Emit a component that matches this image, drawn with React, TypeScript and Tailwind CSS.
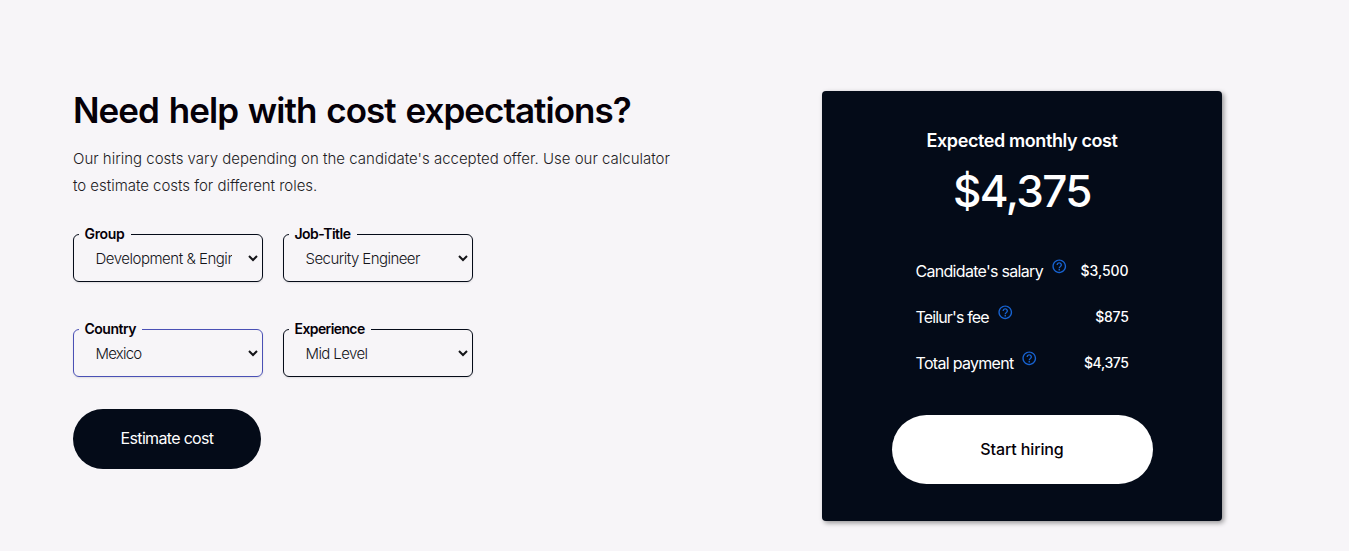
import React from 'react';
import { MdHelpOutline } from 'react-icons/md';

interface SelectFieldProps {
  label: string;
  options: string[];
  labelClass: string;
  selectClass: string;
  active?: boolean;
}

const SelectField: React.FC<SelectFieldProps> = ({
  label,
  options,
  labelClass,
  selectClass,
  active = false,
}) => (
  <fieldset
    className={`h-[58px] w-[190px] min-w-0 rounded-md border pl-[5px] shadow-[0_1px_2px_rgba(0,0,0,0.1)] ${
      active ? 'border-[#4a50b5]' : 'border-[#050b18]'
    }`}
  >
    <legend
      className={`h-5 pl-[5.5px] pr-[6.5px] text-[14px] leading-5 font-semibold whitespace-nowrap text-[#050008] ${labelClass}`}
    >
      {label}
    </legend>
    <select
      className={`block h-[29px] w-[182px] pl-[12.5px] pr-[13px] text-[15px] font-light text-[#141418] outline-none ${selectClass}`}
    >
      {options.map((option) => (
        <option key={option}>{option}</option>
      ))}
    </select>
  </fieldset>
);

interface CostRowProps {
  label: string;
  value: string;
  labelClass: string;
  valueClass: string;
}

const CostRow: React.FC<CostRowProps> = ({ label, value, labelClass, valueClass }) => (
  <div className="flex h-[46px] items-center justify-between">
    <div className="flex items-center">
      <span className={`whitespace-nowrap text-[16px] ${labelClass}`}>{label}</span>
      <MdHelpOutline className="mb-[10px] ml-2 size-[16.5px] text-[#1763d1]" />
    </div>
    <span className={`pb-px text-[14px] font-medium ${valueClass}`}>{value}</span>
  </div>
);

const App: React.FC = () => {
  return (
    <main className="flex h-[551px] w-full items-start overflow-hidden bg-[#f7f5f8] pl-[73px] pt-[91px] font-['Inter','Liberation_Sans',sans-serif]">
      <section className="w-[749px] shrink-0">
        <h1 className="h-10 whitespace-nowrap text-[35px] leading-[39px] font-semibold tracking-[-0.97px] text-[#050008] [word-spacing:2px]">
          Need help with cost expectations?
        </h1>
        <p className="mt-[14px] whitespace-nowrap text-[15px] leading-[27px] font-light text-[#1d1c24]">
          <span className="block">Our hiring costs vary depending on the candidate's accepted offer. Use our calculator</span>
          <span className="block tracking-[-0.03px]">to estimate costs for different roles.</span>
        </p>

        {/* calculator form */}
        <div className="mt-[25px] grid w-[400px] grid-cols-2 gap-x-5 gap-y-[37px]">
          <SelectField
            label="Group"
            options={['Development & Engineering']}
            labelClass="tracking-[-0.35px]"
            selectClass="tracking-[-0.48px]"
          />
          <SelectField
            label="Job-Title"
            options={['Security Engineer']}
            labelClass="tracking-[-0.52px]"
            selectClass="tracking-[-0.55px]"
          />
          <SelectField
            label="Country"
            options={['Mexico']}
            labelClass="tracking-[-0.5px]"
            selectClass="tracking-[-0.8px]"
            active
          />
          <SelectField
            label="Experience"
            options={['Mid Level']}
            labelClass="tracking-[-0.6px]"
            selectClass="tracking-[-0.6px]"
          />
        </div>

        <button className="mt-8 h-[60px] w-[188px] rounded-full bg-[#040b18] pb-[2px] text-[16px] tracking-[-0.67px] text-white">
          Estimate cost
        </button>
      </section>

      {/* result card */}
      <section className="flex h-[430px] w-[400px] shrink-0 flex-col items-center rounded-[4px] bg-[#040b18] pt-9 text-white shadow-[2px_2px_5px_rgba(0,0,0,0.4)]">
        <h2 className="text-[18px] leading-7 font-semibold tracking-[-0.4px]">Expected monthly cost</h2>
        <p className="mt-[8px] text-[44px] leading-[56px] font-medium tracking-[-1.6px]">$4,375</p>
        <div className="mt-[29px] w-[213px]">
          <CostRow
            label="Candidate's salary"
            value="$3,500"
            labelClass="tracking-[-0.7px]"
            valueClass="tracking-[-0.05px]"
          />
          <CostRow
            label="Teilur's fee"
            value="$875"
            labelClass="tracking-[-0.85px]"
            valueClass="tracking-[-0.3px]"
          />
          <CostRow
            label="Total payment"
            value="$4,375"
            labelClass="tracking-[-0.7px]"
            valueClass="tracking-[-0.4px]"
          />
        </div>
        <button className="mt-[29px] h-[69px] w-[261px] rounded-full bg-white pb-px text-[16px] font-medium tracking-[-0.12px] text-[#050008]">
          Start hiring
        </button>
      </section>
    </main>
  );
};

export default App;
